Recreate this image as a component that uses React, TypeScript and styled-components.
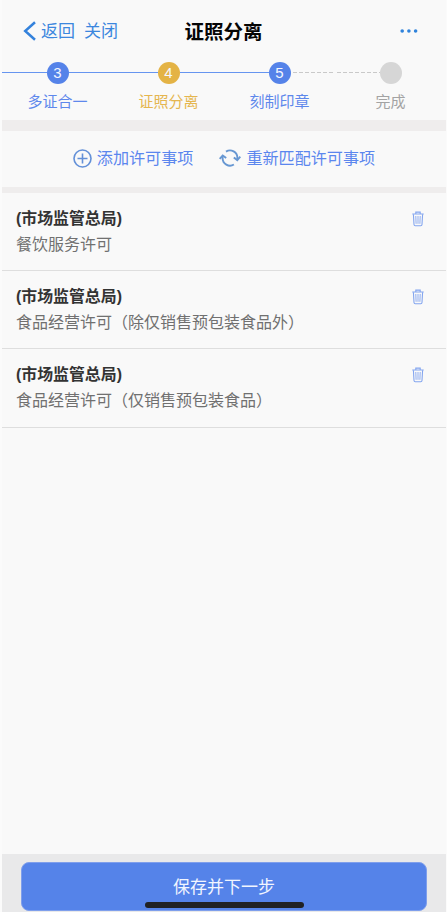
import React from 'react';
import styled, { createGlobalStyle, css } from 'styled-components';

const GlobalStyle = createGlobalStyle`
  *, *::before, *::after { box-sizing: border-box; }
  body {
    margin: 0;
    background: #fbfbfb;
    font-family: "Liberation Sans", "Noto Sans CJK SC", sans-serif;
  }
  button { font: inherit; border: 0; padding: 0; background: none; color: inherit; }
`;

const Page = styled.div`
  display: flex;
  flex-direction: column;
  height: 912px;
  max-width: 447px;
  padding: 0 1px 0 2px;
  overflow: hidden;
`;

const NavBar = styled.header`
  display: grid;
  grid-template-columns: 1fr auto 1fr;
  align-items: center;
  height: 61px;
  padding: 1px 28px 0 21px;
  background: #f9f9f9;
`;

const NavActions = styled.div`
  display: flex;
  align-items: center;
  color: #3c87de;
  font-size: 17px;
  line-height: 24px;
`;

const BackButton = styled.button`
  display: flex;
  align-items: center;
  gap: 5px;
  margin-right: 9px;
`;

const NavText = styled.span`
  display: block;
  padding-top: 1px;
`;

const Title = styled.h1`
  margin: 0 -3px 0 3px;
  padding-top: 1px;
  font-size: 19.5px;
  line-height: 28px;
  font-weight: 700;
  color: #050505;
`;

const MoreButton = styled.button`
  display: flex;
  justify-self: end;
`;

const Steps = styled.ol`
  display: grid;
  grid-template-columns: repeat(4, 1fr);
  margin: 0;
  padding: 0;
  height: 59px;
  list-style: none;
  background: #f9f9f9;
`;

type Tone = 'blue' | 'gold' | 'gray';
type Line = 'solid' | 'dashed' | 'none';

const dotColors: Record<Tone, string> = { blue: '#5583e9', gold: '#e4b345', gray: '#d6d6d6' };
const labelColors: Record<Tone, string> = { blue: '#5e88ec', gold: '#e5b64f', gray: '#a3a3a3' };

const StepItem = styled.li`
  display: flex;
  flex-direction: column;
  align-items: center;
`;

const Track = styled.div`
  display: flex;
  align-items: center;
  width: 100%;
  height: 23px;
`;

const Connector = styled.span<{ $line: Line }>`
  flex: 1;
  height: 1px;
  ${({ $line }) =>
    $line === 'solid' &&
    css`
      background: #6695f0;
    `}
  ${({ $line }) =>
    $line === 'dashed' &&
    css`
      background: repeating-linear-gradient(90deg, transparent 0 2px, #c9c9c9 2px 6px);
    `}
`;

const Dot = styled.span<{ $tone: Tone }>`
  width: 22px;
  height: 22px;
  border-radius: 50%;
  background: ${({ $tone }) => dotColors[$tone]};
  color: #f4f7ff;
  font-size: 15px;
  line-height: 22px;
  text-align: center;
`;

const StepLabel = styled.span<{ $tone: Tone }>`
  margin-top: 7px;
  font-size: 15px;
  line-height: 22px;
  color: ${({ $tone }) => labelColors[$tone]};
`;

const Band = styled.div<{ $height: number }>`
  flex: none;
  height: ${({ $height }) => $height}px;
  background: #efeded;
`;

const Toolbar = styled.div`
  display: flex;
  justify-content: center;
  gap: 26px;
  height: 56px;
  padding-bottom: 2px;
  background: #f9f9f9;
`;

const ToolButton = styled.button`
  display: flex;
  align-items: center;
  gap: 5px;
  font-size: 16.1px;
  line-height: 24px;
  color: #5b86ee;
  white-space: nowrap;
  svg { flex: none; }
`;

const PermitList = styled.ul`
  flex: 1;
  margin: 0;
  padding: 0;
  list-style: none;
  background: #f9f9f9;
`;

const PermitRow = styled.li`
  display: flex;
  justify-content: space-between;
  align-items: flex-start;
  height: 78.2px;
  padding: 13px 22px 0 14px;
  border-bottom: 1px solid #dedede;
`;

const Agency = styled.strong`
  display: block;
  font-size: 15.9px;
  line-height: 26px;
  color: #333;
`;

const Permit = styled.span`
  display: block;
  padding-top: 1px;
  font-size: 16px;
  line-height: 24px;
  color: #707070;
`;

const DeleteButton = styled.button`
  display: flex;
  margin-top: 5px;
`;

const Footer = styled.footer`
  display: flex;
  flex: none;
  height: 58px;
  padding: 8px 19px 0;
  background: #e9e9ea;
`;

const SaveButton = styled.button`
  display: flex;
  flex: 1;
  flex-direction: column;
  align-items: center;
  height: 49px;
  padding-top: 13px;
  border: 1px solid #7f9fec;
  border-radius: 8px;
  background: #5583e9;
  color: #f1f5ff;
  font-size: 17px;
  line-height: 24px;
`;

const HomeIndicator = styled.span`
  width: 159px;
  height: 6px;
  margin: 2px 0 0;
  border-radius: 3px;
  background: #202124;
`;

const BackIcon = () => (
  <svg width="13" height="20" viewBox="0 0 13 20" fill="none" stroke="#3482dc" strokeWidth="2.5">
    <path d="M12 1.2 2.2 10 12 18.8" />
  </svg>
);

const MoreIcon = () => (
  <svg width="18" height="4" viewBox="0 0 18 4" fill="#2f83dc">
    <circle cx="2.2" cy="2" r="1.8" />
    <circle cx="8.9" cy="2" r="1.8" />
    <circle cx="15.6" cy="2" r="1.8" />
  </svg>
);

const AddIcon = () => (
  <svg width="19" height="19" viewBox="0 0 19 19" fill="none" stroke="#6390d8" strokeWidth="1.6">
    <circle cx="9.5" cy="9.5" r="8.5" />
    <path d="M4.5 9.5h10M9.5 4.5v10" />
  </svg>
);

const RefreshIcon = () => (
  <svg width="22" height="18" viewBox="0 0 22 18" fill="none" stroke="#6797d2" strokeWidth="1.9">
    <path d="M7 2.6A7.4 7.4 0 0 1 18.4 9v1" />
    <path d="m14.8 8.4 3.5 2.7 3-3.4" />
    <path d="M14.9 15.5A7.4 7.4 0 0 1 3.6 9V7.8" />
    <path d="m.7 9.8 3-3.3L7.2 9" />
  </svg>
);

const TrashIcon = () => (
  <svg width="12" height="16" viewBox="0 0 12 16" fill="none" stroke="#83a5ef" strokeWidth="1.1">
    <path d="M.3 3h11.4M3.8 3V1.1h4.4V3" />
    <path d="M1.4 3.2 2 13.5q.1 1.2 1.2 1.2h5.6q1.1 0 1.2-1.2l.6-10.3" />
    <path d="m3.8 5 .3 7.8M6 5v7.8M8.2 5l-.3 7.8" strokeWidth=".9" />
  </svg>
);

interface Step {
  label: string;
  mark?: string;
  tone: Tone;
  before: Line;
  after: Line;
}

const steps: Step[] = [
  { label: '多证合一', mark: '3', tone: 'blue', before: 'solid', after: 'solid' },
  { label: '证照分离', mark: '4', tone: 'gold', before: 'solid', after: 'solid' },
  { label: '刻制印章', mark: '5', tone: 'blue', before: 'solid', after: 'dashed' },
  { label: '完成', tone: 'gray', before: 'dashed', after: 'none' },
];

const permits = [
  { agency: '(市场监管总局)', name: '餐饮服务许可' },
  { agency: '(市场监管总局)', name: '食品经营许可（除仅销售预包装食品外）' },
  { agency: '(市场监管总局)', name: '食品经营许可（仅销售预包装食品）' },
];

export default function App() {
  return (
    <>
      <GlobalStyle />
      <Page>
        <NavBar>
          <NavActions>
            <BackButton>
              <BackIcon />
              <NavText>返回</NavText>
            </BackButton>
            <button>
              <NavText>关闭</NavText>
            </button>
          </NavActions>
          <Title>证照分离</Title>
          <MoreButton aria-label="更多">
            <MoreIcon />
          </MoreButton>
        </NavBar>
        <Steps>
          {steps.map((step) => (
            <StepItem key={step.label}>
              <Track>
                <Connector $line={step.before} />
                <Dot $tone={step.tone}>{step.mark}</Dot>
                <Connector $line={step.after} />
              </Track>
              <StepLabel $tone={step.tone}>{step.label}</StepLabel>
            </StepItem>
          ))}
        </Steps>
        <Band $height={11} />
        <Toolbar>
          <ToolButton>
            <AddIcon />
            添加许可事项
          </ToolButton>
          <ToolButton>
            <RefreshIcon />
            重新匹配许可事项
          </ToolButton>
        </Toolbar>
        <Band $height={6} />
        <PermitList>
          {permits.map((permit) => (
            <PermitRow key={permit.name}>
              <div>
                <Agency>{permit.agency}</Agency>
                <Permit>{permit.name}</Permit>
              </div>
              <DeleteButton aria-label="删除">
                <TrashIcon />
              </DeleteButton>
            </PermitRow>
          ))}
        </PermitList>
        <Footer>
          <SaveButton>
            保存并下一步
            <HomeIndicator />
          </SaveButton>
        </Footer>
      </Page>
    </>
  );
}
